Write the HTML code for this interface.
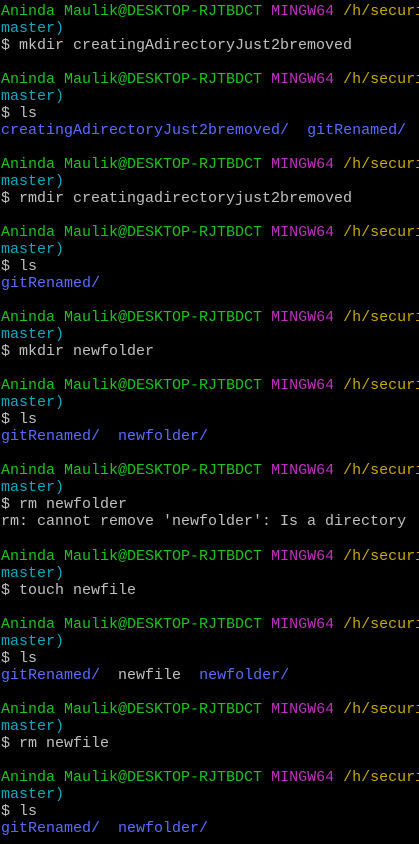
<!DOCTYPE html>
<html><head><meta charset="utf-8"><style>
html,body{margin:0;padding:0;background:#000;width:419px;height:844px;overflow:hidden}
pre{margin:0;padding:3px 0 0 1px;font-family:"Liberation Mono",monospace;font-size:15px;line-height:17.02px;color:#c0c0c0;white-space:pre}
.g{color:#1cc41c}.m{color:#c030c0}.y{color:#c8a800}.c{color:#10a8c0}.b{color:#5a6cff}
</style></head><body><pre><span class="g">Aninda Maulik@DESKTOP-RJTBDCT</span> <span class="m">MINGW64</span> <span class="y">/h/securit</span>
<span class="c">master)</span>
$ mkdir creatingAdirectoryJust2bremoved

<span class="g">Aninda Maulik@DESKTOP-RJTBDCT</span> <span class="m">MINGW64</span> <span class="y">/h/securit</span>
<span class="c">master)</span>
$ ls
<span class="b">creatingAdirectoryJust2bremoved/</span>  <span class="b">gitRenamed/</span>

<span class="g">Aninda Maulik@DESKTOP-RJTBDCT</span> <span class="m">MINGW64</span> <span class="y">/h/securit</span>
<span class="c">master)</span>
$ rmdir creatingadirectoryjust2bremoved

<span class="g">Aninda Maulik@DESKTOP-RJTBDCT</span> <span class="m">MINGW64</span> <span class="y">/h/securit</span>
<span class="c">master)</span>
$ ls
<span class="b">gitRenamed/</span>

<span class="g">Aninda Maulik@DESKTOP-RJTBDCT</span> <span class="m">MINGW64</span> <span class="y">/h/securit</span>
<span class="c">master)</span>
$ mkdir newfolder

<span class="g">Aninda Maulik@DESKTOP-RJTBDCT</span> <span class="m">MINGW64</span> <span class="y">/h/securit</span>
<span class="c">master)</span>
$ ls
<span class="b">gitRenamed/</span>  <span class="b">newfolder/</span>

<span class="g">Aninda Maulik@DESKTOP-RJTBDCT</span> <span class="m">MINGW64</span> <span class="y">/h/securit</span>
<span class="c">master)</span>
$ rm newfolder
rm: cannot remove 'newfolder': Is a directory

<span class="g">Aninda Maulik@DESKTOP-RJTBDCT</span> <span class="m">MINGW64</span> <span class="y">/h/securit</span>
<span class="c">master)</span>
$ touch newfile

<span class="g">Aninda Maulik@DESKTOP-RJTBDCT</span> <span class="m">MINGW64</span> <span class="y">/h/securit</span>
<span class="c">master)</span>
$ ls
<span class="b">gitRenamed/</span>  newfile  <span class="b">newfolder/</span>

<span class="g">Aninda Maulik@DESKTOP-RJTBDCT</span> <span class="m">MINGW64</span> <span class="y">/h/securit</span>
<span class="c">master)</span>
$ rm newfile

<span class="g">Aninda Maulik@DESKTOP-RJTBDCT</span> <span class="m">MINGW64</span> <span class="y">/h/securit</span>
<span class="c">master)</span>
$ ls
<span class="b">gitRenamed/</span>  <span class="b">newfolder/</span>
</pre></body></html>
